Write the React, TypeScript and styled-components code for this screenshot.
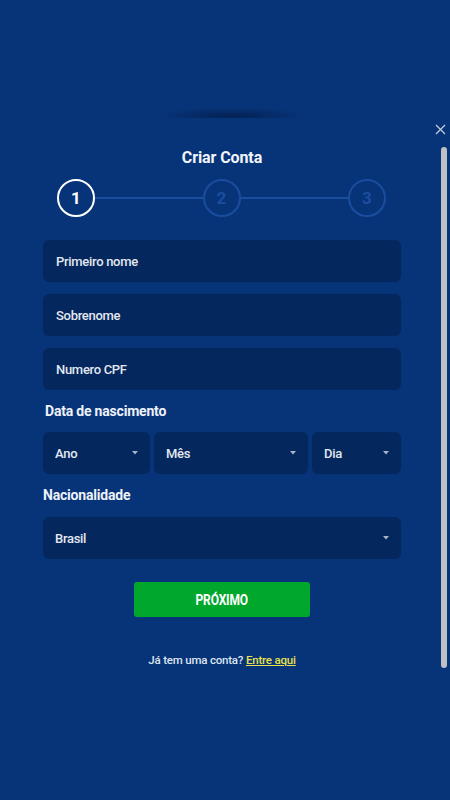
import React from 'react';
import styled, { createGlobalStyle } from 'styled-components';

const GlobalStyle = createGlobalStyle`
  html, body {
    margin: 0;
    padding: 0;
    background: #073479;
  }
  body {
    font-family: Roboto, "Noto Sans", sans-serif;
    color: #e6ebf3;
  }
`;

type Step = { num: number, active: boolean };

const steps: Step[] = [
  { num: 1, active: true },
  { num: 2, active: false },
  { num: 3, active: false },
];

const textFields = ['Primeiro nome', 'Sobrenome', 'Numero CPF'];

const dateParts = [
  { label: 'Ano', width: 107 },
  { label: 'Mês', width: 154 },
  { label: 'Dia', width: 89 },
];

const Caret = () => (
  <svg width="6" height="4" viewBox="0 0 6 4">
    <path d="M0 0 L6 0 L3 3.5 Z" fill="#a9b4c8" />
  </svg>
);

const App = () => {
  return (
    <Page>
      <GlobalStyle />
      <Modal>
        <CloseButton aria-label="Fechar">
          <svg width="11" height="11" viewBox="0 0 11 11">
            <path d="M1 1 L10 10 M10 1 L1 10" stroke="#c3cbdb" strokeWidth="1.3" />
          </svg>
        </CloseButton>
        <Content>
          <Title>Criar Conta</Title>
          <Stepper>
            {steps.map((step, i) => (
              <React.Fragment key={step.num}>
                {i > 0 && <StepLine />}
                <StepCircle $active={step.active}>{step.num}</StepCircle>
              </React.Fragment>
            ))}
          </Stepper>
          <Fields>
            {textFields.map((f) => (
              <Field key={f}>{f}</Field>
            ))}
          </Fields>
          <Label $indent={2}>Data de nascimento</Label>
          <SelectRow>
            {dateParts.map((p) => (
              <Select key={p.label} $width={p.width}>
                <span>{p.label}</span>
                <Caret />
              </Select>
            ))}
          </SelectRow>
          <Label $indent={0}>Nacionalidade</Label>
          <Select $width={358}>
            <span>Brasil</span>
            <Caret />
          </Select>
          <NextButton>
            <ButtonText>PRÓXIMO</ButtonText>
          </NextButton>
          <Footer>
            Já tem uma conta? <FooterLink href="#">Entre aqui</FooterLink>
          </Footer>
        </Content>
        <ScrollTrack />
      </Modal>
    </Page>
  );
}

export default App;

const Page = styled.div`
  width: 450px;
  height: 800px;
  overflow: hidden;
  background:
    radial-gradient(ellipse 75px 9px at 232px 116px, rgba(2, 18, 55, 0.55), rgba(2, 18, 55, 0) 100%),
    #073479;
`

const Modal = styled.div`
  position: relative;
  margin-top: 118px;
  display: flex;
  align-items: flex-start;
  background: #073479;
`

const CloseButton = styled.button`
  position: absolute;
  top: 6px;
  right: 4px;
  padding: 0;
  border: none;
  background: transparent;
  display: flex;
  line-height: 0;
`

const Content = styled.div`
  width: 358px;
  margin-left: 43px;
  padding-top: 31px;
  display: flex;
  flex-direction: column;
`

const Title = styled.h2`
  margin: 0;
  text-align: center;
  font-size: 16px;
  line-height: 18px;
  font-weight: 700;
  color: #f2f5fa;
  letter-spacing: -0.1px;
`

const Stepper = styled.div`
  margin-top: 12px;
  padding: 0 15px 0 14px;
  display: flex;
  align-items: center;
`

const StepLine = styled.div`
  flex: 1;
  height: 2px;
  background: #1b4d9e;
`

const StepCircle = styled.div<{ $active: boolean }>`
  width: 38px;
  height: 38px;
  box-sizing: border-box;
  border-radius: 50%;
  border: 2px solid ${(p) => (p.$active ? '#ffffff' : '#1b4d9e')};
  color: ${(p) => (p.$active ? '#ffffff' : '#1b4d9e')};
  display: flex;
  align-items: center;
  justify-content: center;
  font-size: 17px;
  font-weight: 700;
`

const Fields = styled.div`
  margin-top: 23px;
  display: flex;
  flex-direction: column;
  gap: 12px;
`

const Field = styled.div`
  height: 42px;
  box-sizing: border-box;
  border-radius: 6px;
  background: #04275d;
  padding: 0 13px;
  display: flex;
  align-items: center;
  font-size: 13px;
  font-weight: 500;
  letter-spacing: -0.3px;
  color: #e3e8f1;
`

const Label = styled.div<{ $indent: number }>`
  margin-top: 13px;
  padding-left: ${(p) => p.$indent}px;
  font-size: 14px;
  line-height: 16px;
  font-weight: 700;
  letter-spacing: -0.2px;
  color: #eef2f8;
`

const SelectRow = styled.div`
  margin-top: 13px;
  display: flex;
  justify-content: space-between;
`

const Select = styled(Field)<{ $width: number }>`
  width: ${(p) => p.$width}px;
  justify-content: space-between;
  padding: 0 12px;
  ${Label} + & {
    margin-top: 14px;
  }
`

const NextButton = styled.button`
  align-self: center;
  margin-top: 23px;
  width: 176px;
  height: 35px;
  border: none;
  border-radius: 3px;
  background: #00a72d;
  display: flex;
  align-items: center;
  justify-content: center;
`

const ButtonText = styled.span`
  display: inline-block;
  transform: scaleX(0.8);
  color: #ffffff;
  font-family: Roboto, sans-serif;
  font-size: 15px;
  font-weight: 700;
  letter-spacing: -0.2px;
`

const Footer = styled.div`
  margin-top: 36px;
  text-align: center;
  font-size: 11.5px;
  line-height: 14px;
  font-weight: 500;
  color: #dfe5ef;
  letter-spacing: -0.2px;
`

const FooterLink = styled.a`
  color: #e9e14b;
  text-decoration: underline;
  text-underline-offset: 1px;
`

const ScrollTrack = styled.div`
  margin-top: 29px;
  margin-left: 40px;
  width: 6px;
  height: 521px;
  border-radius: 3px;
  background: #bfc0c4;
`
